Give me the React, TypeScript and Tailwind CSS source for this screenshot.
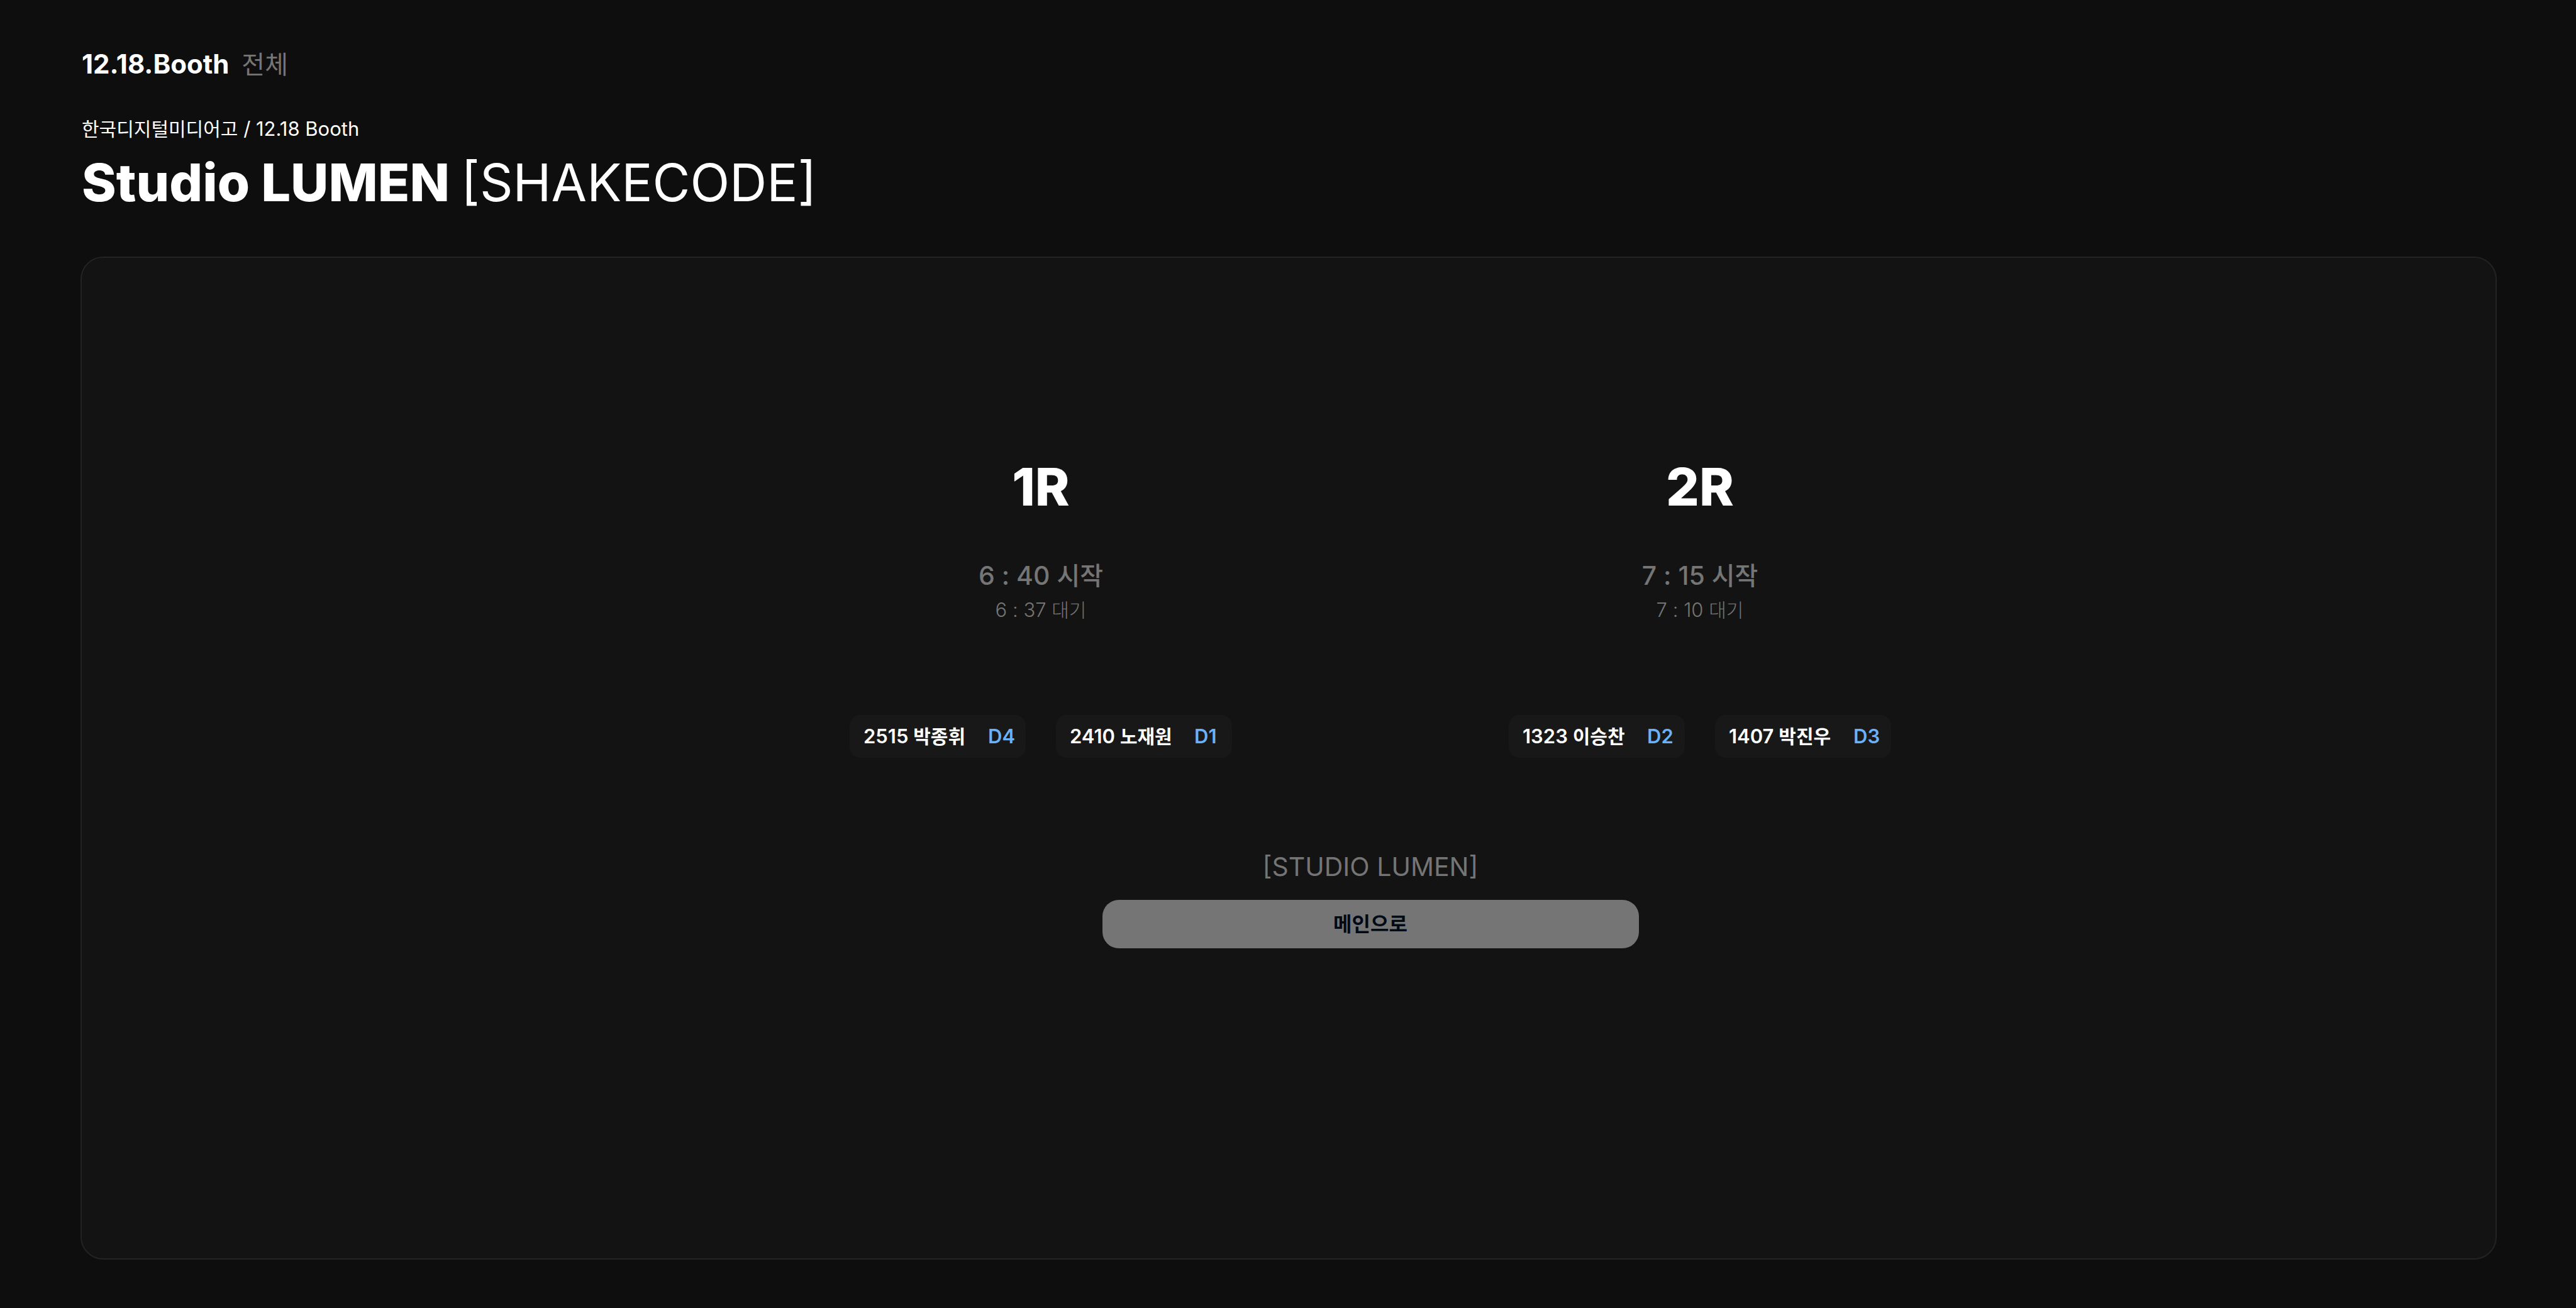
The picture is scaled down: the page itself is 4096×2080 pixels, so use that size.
import type { ReactNode } from "react";

type Player = { id: string; name: string; seat: string };

type Round = {
  title: string;
  start: string;
  standby: string;
  players: Player[];
};

const rounds: Round[] = [
  {
    title: "1R",
    start: "6 : 40",
    standby: "6 : 37",
    players: [
      { id: "2515", name: "박종휘", seat: "D4" },
      { id: "2410", name: "노재원", seat: "D1" },
    ],
  },
  {
    title: "2R",
    start: "7 : 15",
    standby: "7 : 10",
    players: [
      { id: "1323", name: "이승찬", seat: "D2" },
      { id: "1407", name: "박진우", seat: "D3" },
    ],
  },
];

// Hangul runs slightly smaller than the Latin text beside it.
function KoLarge({ children }: { children: ReactNode }) {
  return <span className="text-[40px] leading-none">{children}</span>;
}

function KoSmall({ children }: { children: ReactNode }) {
  return <span className="text-[30px] leading-none">{children}</span>;
}

function PlayerChip({ player }: { player: Player }) {
  return (
    <li className="flex h-[68px] w-[280px] items-center justify-between rounded-[16px] bg-[#181818] pr-5 pl-[22px] text-[31px] leading-[40px] font-semibold whitespace-nowrap">
      <span className="text-white">
        {player.id} <KoSmall>{player.name}</KoSmall>
      </span>
      <span className="w-10 text-[#6bb0f8]">{player.seat}</span>
    </li>
  );
}

function RoundColumn({ round }: { round: Round }) {
  return (
    <section className="flex flex-col items-center text-[#757575]">
      <h2 className="text-[83px] leading-[100px] font-extrabold text-white">{round.title}</h2>
      <p className="mt-[66px] text-[41px] leading-[50px] font-medium">
        {round.start} <KoLarge>시작</KoLarge>
      </p>
      <p className="mt-[10px] text-[31px] leading-[40px] font-light">
        {round.standby} <KoSmall>대기</KoSmall>
      </p>
      <ul className="mt-[147px] flex gap-12">
        {round.players.map((player) => (
          <PlayerChip key={player.id} player={player} />
        ))}
      </ul>
    </section>
  );
}

export default function App() {
  return (
    <div className="flex min-h-screen flex-col bg-[#0e0e0e] pt-[77px] pr-[126px] pb-[77px] pl-32 font-['Inter','Noto_Sans_CJK_KR',sans-serif] text-white antialiased">
      <nav className="flex items-baseline gap-5 pl-0.5 text-[42px] leading-[50px]">
        <a href="#booth" className="font-bold">
          12.18.Booth
        </a>
        <a href="#all" className="text-[#757575]">
          <KoLarge>전체</KoLarge>
        </a>
      </nav>

      <header className="mt-[58px] pl-0.5">
        <p className="text-[31px] leading-[40px]">
          <KoSmall>한국디지털미디어고</KoSmall> / 12.18 Booth
        </p>
        <h1 className="mt-[15px] text-[83px] leading-[100px] font-extrabold">
          Studio LUMEN <span className="text-[82px] leading-none font-normal">[SHAKECODE]</span>
        </h1>
      </header>

      <main className="mt-[68px] flex flex-1 flex-col items-center rounded-[36px] border-2 border-[#232323] bg-[#131313] pt-[314px] pl-[260px]">
        <div className="flex gap-[440px]">
          {rounds.map((round) => (
            <RoundColumn key={round.title} round={round} />
          ))}
        </div>
        <p className="mt-[148px] text-[41px] leading-[50px] text-[#757575]">[STUDIO LUMEN]</p>
        <button
          type="button"
          className="mt-[28px] h-[77px] w-[853px] rounded-[26px] bg-[#757575] text-[32px] leading-[40px] font-bold text-[#000a14]"
        >
          메인으로
        </button>
      </main>
    </div>
  );
}
